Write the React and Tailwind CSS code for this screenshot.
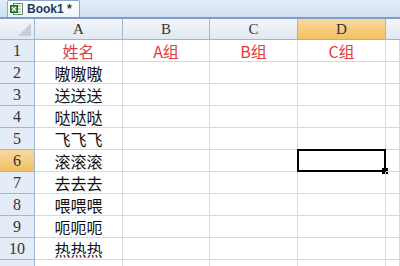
import React from 'react'

const cols = ['A', 'B', 'C', 'D']
const names = ['嗷嗷嗷', '送送送', '哒哒哒', '飞飞飞', '滚滚滚', '去去去', '喂喂喂', '呃呃呃', '热热热']
const gridCols = 'grid grid-cols-[35px_88px_87px_88px_88px_1fr]'

function ExcelIcon() {
  return (
    <svg width="14" height="13" viewBox="0 0 14 13">
      <rect x="3.5" y="0.5" width="9" height="11" fill="#fff" stroke="#6b8a6b" />
      <line x1="7" y1="3" x2="11" y2="3" stroke="#8aa58a" />
      <line x1="7" y1="6" x2="11" y2="6" stroke="#8aa58a" />
      <line x1="7" y1="9" x2="11" y2="9" stroke="#8aa58a" />
      <rect x="0.5" y="2.5" width="7" height="7" fill="#2f8f3a" stroke="#1d6a26" />
      <path d="M2 4 L6 8 M6 4 L2 8" stroke="#fff" strokeWidth="1.2" />
    </svg>
  )
}

function Row({ n, children, active }) {
  return (
    <div className={`${gridCols} h-[22px]`}>
      <div
        className={`flex items-center justify-center border-r border-b border-[#9eb6ce] text-[16px] leading-none text-[#333] ${
          active ? 'bg-gradient-to-b from-[#f9d99f] to-[#f1c15f]' : 'bg-[#e4ecf7]'
        }`}
        style={{ fontFamily: '"Liberation Serif", serif' }}
      >
        {n}
      </div>
      {children}
    </div>
  )
}

function Cell({ children, red, selected }) {
  return (
    <div
      className={`relative flex items-center justify-center border-r border-b border-[#d4dae4] text-[16px] leading-none ${
        red ? 'text-[#e23b3b]' : 'text-[#111]'
      }`}
      style={{ fontFamily: '"Noto Sans CJK SC", "Liberation Serif", serif' }}
    >
      {children}
      {selected && (
        <>
          <div className="absolute left-[-1px] top-[-1px] right-[-1px] bottom-[-1px] border-2 border-black" />
          <div className="absolute right-[-3px] bottom-[-3px] h-[6px] w-[6px] bg-black" />
        </>
      )}
    </div>
  )
}

export default function App() {
  return (
    <div className="h-[266px] w-[400px] overflow-hidden bg-white">
      <div className="flex h-[19px] items-end border-b-2 border-[#7f9dc6] bg-gradient-to-b from-[#e3edf8] to-[#cfdff1] pl-[7px]">
        <div className="flex h-[17px] items-center gap-[3px] rounded-t-[2px] border border-b-0 border-[#8aa6c8] bg-gradient-to-b from-white to-[#eef3f9] pl-[2px] pr-[7px]">
          <ExcelIcon />
          <span
            className="text-[12px] font-bold leading-none text-[#1e395b]"
            style={{ fontFamily: '"Liberation Sans", sans-serif' }}
          >
            Book1 *
          </span>
        </div>
      </div>
      <div className={`${gridCols} h-[21px]`}>
        <div className="relative border-r border-b border-[#9eb6ce] bg-gradient-to-b from-[#f3f6fa] to-[#e1e8f1]">
          <svg className="absolute bottom-[3px] right-[3px]" width="13" height="13" viewBox="0 0 13 13">
            <path d="M13 0 L13 13 L0 13 Z" fill="#c3cfdc" />
          </svg>
        </div>
        {cols.map((c) => (
          <div
            key={c}
            className={`flex items-center justify-center border-r border-b border-[#9eb6ce] text-[15px] leading-none text-[#333] ${
              c === 'D' ? 'bg-gradient-to-b from-[#f9d99f] to-[#f1c15f]' : 'bg-gradient-to-b from-[#f3f6fa] to-[#e1e8f1]'
            }`}
            style={{ fontFamily: '"Liberation Serif", serif' }}
          >
            {c}
          </div>
        ))}
        <div className="border-b border-[#9eb6ce] bg-gradient-to-b from-[#f3f6fa] to-[#e1e8f1]" />
      </div>
      <Row n={1}>
        <Cell red>姓名</Cell>
        <Cell red>A组</Cell>
        <Cell red>B组</Cell>
        <Cell red>C组</Cell>
        <Cell />
      </Row>
      {names.map((name, i) => (
        <Row key={i} n={i + 2} active={i + 2 === 6}>
          <Cell>{name}</Cell>
          <Cell />
          <Cell />
          <Cell selected={i + 2 === 6} />
          <Cell />
        </Row>
      ))}
      <Row n="">
        <Cell />
        <Cell />
        <Cell />
        <Cell />
        <Cell />
      </Row>
    </div>
  )
}
